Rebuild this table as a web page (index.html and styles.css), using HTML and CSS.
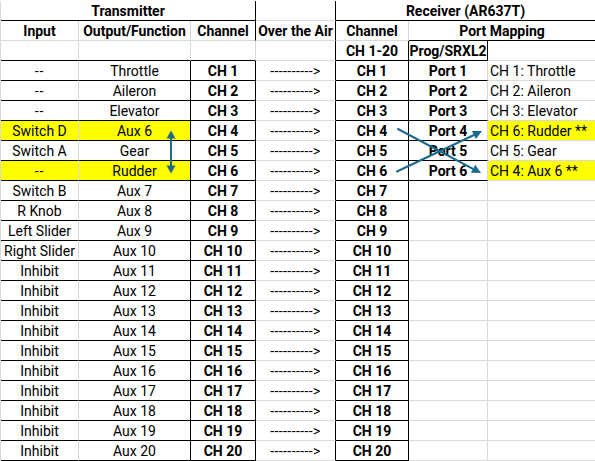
FILE: index.html
```html
<!DOCTYPE html>
<html>
<head>
<meta charset="utf-8">
<link rel="stylesheet" href="styles.css">
</head>
<body>
<div class="sheet">
  <div class="grid">
    <!-- row 1 -->
    <div class="c h sp3 bb br">Transmitter</div>
    <div class="c br"></div>
    <div class="c h sp3 bb">Receiver (AR637T)</div>
    <!-- row 2 -->
    <div class="c h">Input</div>
    <div class="c h">Output/Function</div>
    <div class="c h br">Channel</div>
    <div class="c h br">Over the Air</div>
    <div class="c h">Channel</div>
    <div class="c h sp2 bb">Port Mapping</div>
    <!-- row 3 -->
    <div class="c bb"></div>
    <div class="c bb"></div>
    <div class="c bb"></div>
    <div class="c br"></div>
    <div class="c h bb br">CH 1-20</div>
    <div class="c h bb br">Prog/SRXL2</div>
    <div class="c"></div>
    <!-- data -->
    <div class="c bb dd">--</div><div class="c bb br">Throttle</div><div class="c h bb br">CH 1</div><div class="c ota br">----------&gt;</div><div class="c h bb br">CH 1</div><div class="c h bb">Port 1</div><div class="c map">CH 1: Throttle</div>
    <div class="c bb dd">--</div><div class="c bb br">Aileron</div><div class="c h bb br">CH 2</div><div class="c ota br">----------&gt;</div><div class="c h bb br">CH 2</div><div class="c h bb">Port 2</div><div class="c map">CH 2: Aileron</div>
    <div class="c bb dd">--</div><div class="c bb br">Elevator</div><div class="c h bb br">CH 3</div><div class="c ota br">----------&gt;</div><div class="c h bb br">CH 3</div><div class="c h bb">Port 3</div><div class="c map">CH 3: Elevator</div>
    <div class="c bb y">Switch D</div><div class="c bb br y">Aux 6</div><div class="c h bb br">CH 4</div><div class="c ota br">----------&gt;</div><div class="c h bb br">CH 4</div><div class="c h bb">Port 4</div><div class="c map y">CH 6: Rudder **</div>
    <div class="c bb">Switch A</div><div class="c bb br">Gear</div><div class="c h bb br">CH 5</div><div class="c ota br">----------&gt;</div><div class="c h bb br">CH 5</div><div class="c h bb">Port 5</div><div class="c map">CH 5: Gear</div>
    <div class="c bb y dd">--</div><div class="c bb br y">Rudder</div><div class="c h bb br">CH 6</div><div class="c ota br">----------&gt;</div><div class="c h bb br">CH 6</div><div class="c h bb">Port 6</div><div class="c map y">CH 4: Aux 6 **</div>
    <div class="c bb">Switch B</div><div class="c bb br">Aux 7</div><div class="c h bb br">CH 7</div><div class="c ota br">----------&gt;</div><div class="c h bb br">CH 7</div><div class="c"></div><div class="c map"></div>
    <div class="c bb">R Knob</div><div class="c bb br">Aux 8</div><div class="c h bb br">CH 8</div><div class="c ota br">----------&gt;</div><div class="c h bb br">CH 8</div><div class="c"></div><div class="c map"></div>
    <div class="c bb">Left Slider</div><div class="c bb br">Aux 9</div><div class="c h bb br">CH 9</div><div class="c ota br">----------&gt;</div><div class="c h bb br">CH 9</div><div class="c"></div><div class="c map"></div>
    <div class="c bb">Right Slider</div><div class="c bb br">Aux 10</div><div class="c h bb br">CH 10</div><div class="c ota br">----------&gt;</div><div class="c h bb br">CH 10</div><div class="c"></div><div class="c map"></div>
    <div class="c bb">Inhibit</div><div class="c bb br">Aux 11</div><div class="c h bb br">CH 11</div><div class="c ota br">----------&gt;</div><div class="c h bb br">CH 11</div><div class="c"></div><div class="c map"></div>
    <div class="c bb">Inhibit</div><div class="c bb br">Aux 12</div><div class="c h bb br">CH 12</div><div class="c ota br">----------&gt;</div><div class="c h bb br">CH 12</div><div class="c"></div><div class="c map"></div>
    <div class="c bb">Inhibit</div><div class="c bb br">Aux 13</div><div class="c h bb br">CH 13</div><div class="c ota br">----------&gt;</div><div class="c h bb br">CH 13</div><div class="c"></div><div class="c map"></div>
    <div class="c bb">Inhibit</div><div class="c bb br">Aux 14</div><div class="c h bb br">CH 14</div><div class="c ota br">----------&gt;</div><div class="c h bb br">CH 14</div><div class="c"></div><div class="c map"></div>
    <div class="c bb">Inhibit</div><div class="c bb br">Aux 15</div><div class="c h bb br">CH 15</div><div class="c ota br">----------&gt;</div><div class="c h bb br">CH 15</div><div class="c"></div><div class="c map"></div>
    <div class="c bb">Inhibit</div><div class="c bb br">Aux 16</div><div class="c h bb br">CH 16</div><div class="c ota br">----------&gt;</div><div class="c h bb br">CH 16</div><div class="c"></div><div class="c map"></div>
    <div class="c bb">Inhibit</div><div class="c bb br">Aux 17</div><div class="c h bb br">CH 17</div><div class="c ota br">----------&gt;</div><div class="c h bb br">CH 17</div><div class="c"></div><div class="c map"></div>
    <div class="c bb">Inhibit</div><div class="c bb br">Aux 18</div><div class="c h bb br">CH 18</div><div class="c ota br">----------&gt;</div><div class="c h bb br">CH 18</div><div class="c"></div><div class="c map"></div>
    <div class="c bb">Inhibit</div><div class="c bb br">Aux 19</div><div class="c h bb br">CH 19</div><div class="c ota br">----------&gt;</div><div class="c h bb br">CH 19</div><div class="c"></div><div class="c map"></div>
    <div class="c bb">Inhibit</div><div class="c bb br">Aux 20</div><div class="c h bb br">CH 20</div><div class="c ota br">----------&gt;</div><div class="c h bb br">CH 20</div><div class="c"></div><div class="c map"></div>
  </div>
  <svg class="arrows" width="595" height="461" viewBox="0 0 595 461" xmlns="http://www.w3.org/2000/svg">
    <g stroke="#1b6a8a" stroke-width="2" fill="none" stroke-linecap="round">
      <line x1="171" y1="137" x2="171" y2="167"/>
      <line x1="398" y1="129" x2="473" y2="168.8"/>
      <line x1="397" y1="171.5" x2="474" y2="135"/>
    </g>
    <g fill="#1b6a8a">
      <polygon points="171,130.5 166.5,138.5 175.5,138.5"/>
      <polygon points="171,173.5 166.5,165.5 175.5,165.5"/>
      <polygon points="481,173 470.9,172.8 475.2,164.8"/>
      <polygon points="482,131 475.9,139 471.9,130.9"/>
    </g>
  </svg>
</div>
</body>
</html>
```

FILE: styles.css
```css
html, body {
  margin: 0;
  padding: 0;
  background: #ffffff;
}

.sheet {
  position: relative;
  width: 595px;
  height: 461px;
  overflow: hidden;
  padding-top: 1px;
  box-sizing: border-box;
}

.grid {
  display: grid;
  grid-template-columns: 78px 112px 65px 80px 73px 79px 108px;
  grid-auto-rows: 20px;
  border-left: 1px solid #d9d9d9;
  font-family: Roboto, "Liberation Sans", sans-serif;
  font-size: 14px;
  color: #000;
}

.c {
  box-sizing: border-box;
  border-right: 1px solid #d9d9d9;
  border-bottom: 1px solid #d9d9d9;
  display: flex;
  align-items: center;
  justify-content: center;
  white-space: nowrap;
  overflow: hidden;
  line-height: 19px;
  padding-top: 1px;
}

.h {
  font-weight: 700;
}

.sp3 {
  grid-column: span 3;
}

.sp2 {
  grid-column: span 2;
}

.bb {
  border-bottom-color: #000;
}

.br {
  border-right-color: #000;
}

.y {
  background: #ffff00;
}

.ota {
  letter-spacing: 0.4px;
}

.dd {
  letter-spacing: 1px;
}

.map {
  justify-content: flex-start;
  padding-left: 2px;
}

.arrows {
  position: absolute;
  left: 0;
  top: 0;
  pointer-events: none;
}
```
